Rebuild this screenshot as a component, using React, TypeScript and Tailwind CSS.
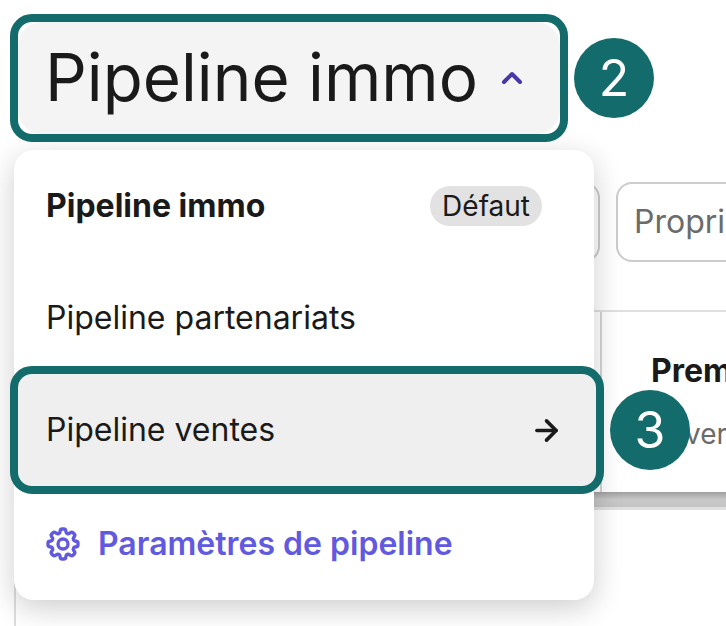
import { ArrowRight, ChevronUp } from 'lucide-react';
import { HiOutlineCog8Tooth } from 'react-icons/hi2';

const FONT = "font-['Inter','Liberation_Sans',sans-serif]";

function Marker({ n, className }: { n: number; className: string }) {
  return (
    <div className={`absolute flex h-20 w-20 items-center justify-center rounded-full bg-[#136c6b] text-[50px] leading-none text-white ${className}`}>
      {n}
    </div>
  );
}

function PipelineMenu() {
  return (
    <div className="absolute left-[14px] top-[150px] h-[450px] w-[580px] rounded-[20px] bg-white shadow-[0_8px_30px_rgba(0,0,0,0.2)]">
      <div className="flex h-[112px] items-center justify-between pl-[32px] pr-[52px]">
        <span className="text-[32px] font-bold text-[#1a1a1a]">Pipeline immo</span>
        <span className="rounded-full bg-[#e2e2e2] px-[12px] py-[1px] text-[28px] leading-[38px] text-[#1a1a1a]">Défaut</span>
      </div>
      <div className="flex h-[112px] items-center pl-[32px] text-[32px] text-[#1a1a1a]">Pipeline partenariats</div>
      <div className="h-[112px]" />
      <div className="flex h-[116px] items-center gap-[15px] pl-[29px] text-[32px] font-semibold text-[#6159e0]">
        <HiOutlineCog8Tooth className="h-[40px] w-[40px]" strokeWidth={2} />
        Paramètres de pipeline
      </div>
    </div>
  );
}

export default function App() {
  return (
    <div className={`relative h-[626px] w-[726px] overflow-hidden bg-white ${FONT}`}>
      <div className="ml-[10px] mt-[14px] h-[128px] w-[558px] rounded-[22px] border-8 border-[#136c6b] bg-white">
        <div className="flex h-full items-center gap-[18px] rounded-[24px] bg-[#f4f4f4] pl-[27px]">
          <span className="text-[65.5px] leading-none text-[#1a1a1a]">Pipeline immo</span>
          <ChevronUp className="h-[32px] w-[32px] text-[#4a35a8]" strokeWidth={3} />
        </div>
      </div>

      <div className="mt-[40px] flex h-[80px] gap-[16px] pl-[300px]">
        <div className="h-full w-[300px] shrink-0 rounded-[16px] border-2 border-[#ccc]" />
        <div className="flex h-full w-[200px] shrink-0 items-center rounded-[16px] border-2 border-[#ccc] pl-[16px] text-[32px] whitespace-nowrap text-[#6b6b6b]">
          Propriétaire
        </div>
      </div>

      <div className="ml-[14px] mt-[48px] h-[200px] w-[800px] border-l-2 border-t-2 border-[#e0e0e0]">
        <div className="flex h-[180px]">
          <div className="w-[586px] shrink-0 border-r-2 border-[#d4d4d4]" />
          <div className="pl-[49px] pt-[35px]">
            <div className="whitespace-nowrap text-[32px] font-bold text-[#1a1a1a]">Premier</div>
            <div className="-ml-[4px] mt-[18px] whitespace-nowrap text-[28px] text-[#6b6b6b]">Ouvert</div>
          </div>
        </div>
        <div className="h-[18px] border-b-[3px] border-[#e0e0e0] bg-gradient-to-b from-[#a0a0a0] via-[#c8c8c8] to-[#c4c4c4]" />
      </div>
      <div className="ml-[14px] h-[120px] border-l-2 border-[#ddd]" />

      <PipelineMenu />

      <div className="absolute left-[10px] top-[366px] flex h-[128px] w-[594px] items-center justify-between rounded-[22px] border-8 border-[#136c6b] bg-[#efefef] pl-[28px] pr-[33px] text-[32px] text-[#1a1a1a]">
        Pipeline ventes
        <ArrowRight className="h-[33px] w-[33px]" strokeWidth={2.6} />
      </div>

      <Marker n={2} className="left-[574px] top-[38px]" />
      <Marker n={3} className="left-[610px] top-[390px]" />
    </div>
  );
}
